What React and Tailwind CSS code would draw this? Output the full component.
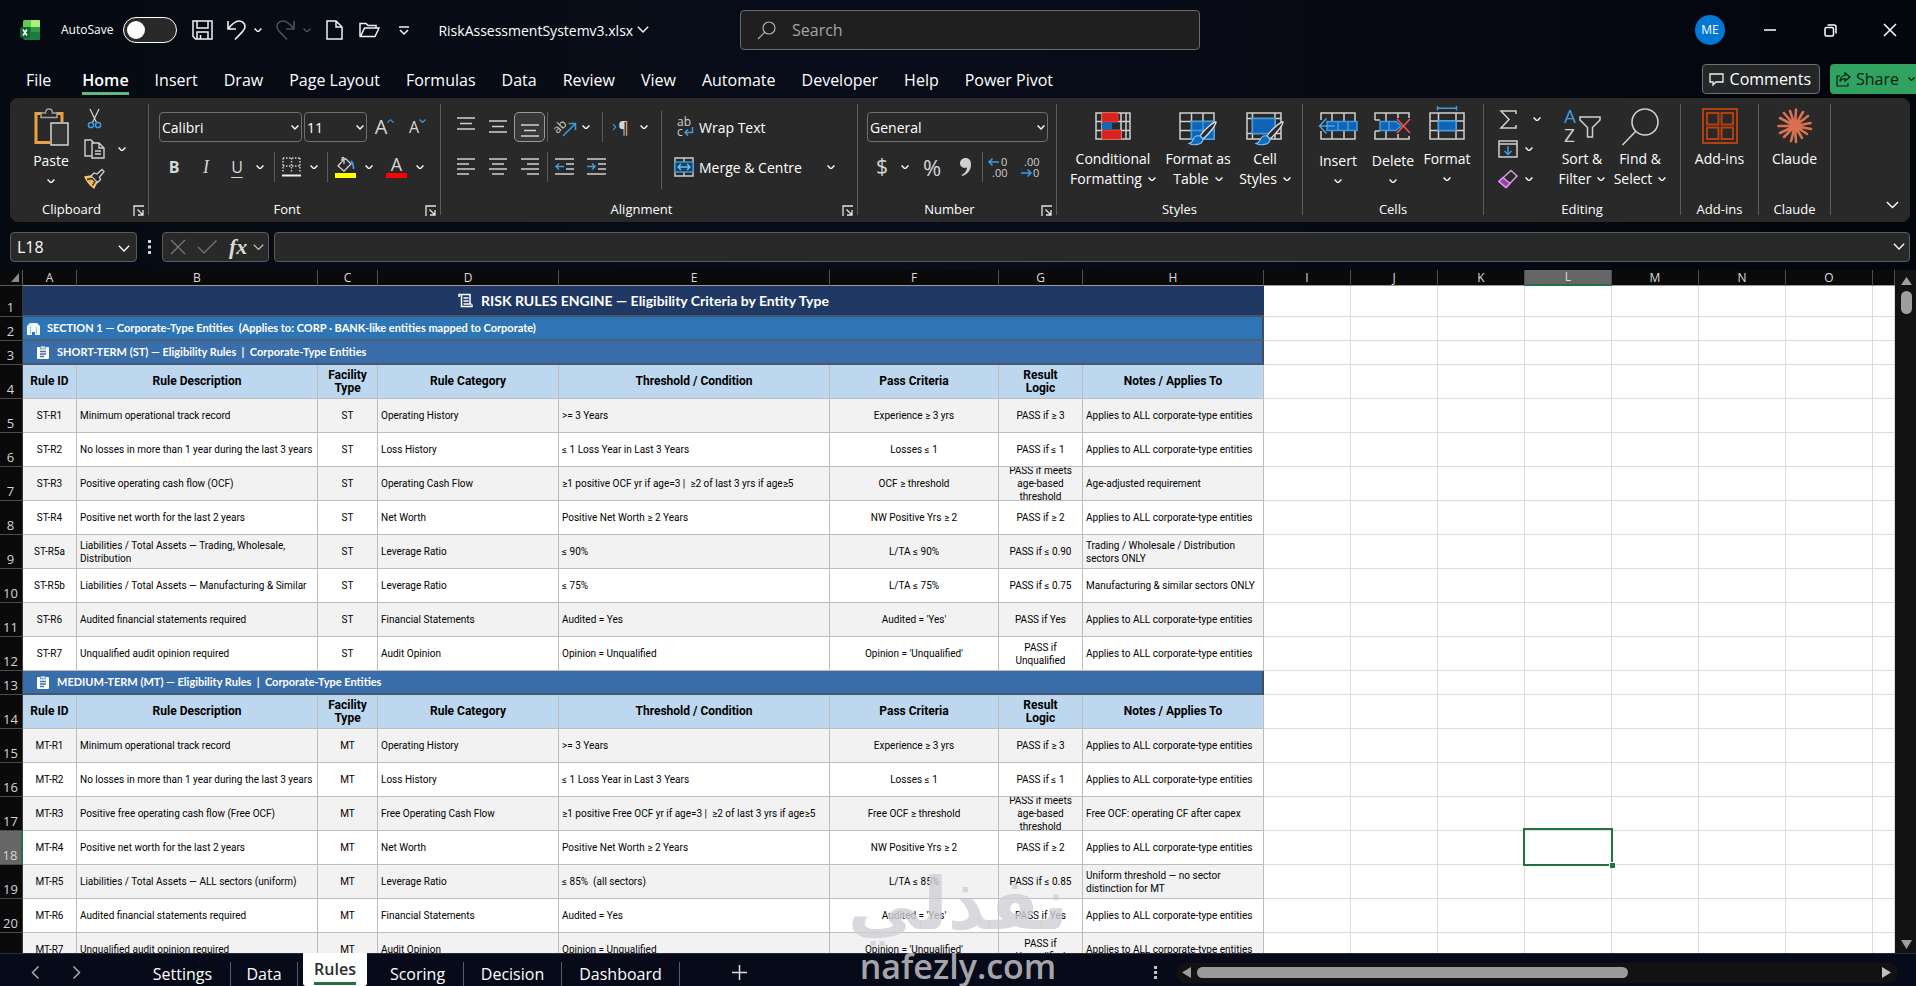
import React, { useState } from 'react';

const columns = [
  { id: 'A', width: 54 },
  { id: 'B', width: 241 },
  { id: 'C', width: 60 },
  { id: 'D', width: 181 },
  { id: 'E', width: 271 },
  { id: 'F', width: 169 },
  { id: 'G', width: 84 },
  { id: 'H', width: 181 },
  { id: 'I', width: 87 },
  { id: 'J', width: 87 },
  { id: 'K', width: 87 },
  { id: 'L', width: 87 },
  { id: 'M', width: 87 },
  { id: 'N', width: 87 },
  { id: 'O', width: 87 },
  { id: '', width: null },
];

const emptyColumns = ['I', 'J', 'K', 'L', 'M', 'N', 'O', 'P'];
const centered = [0, 2, 5, 6];

const header = ['Rule ID', 'Rule Description', 'Facility Type', 'Rule Category', 'Threshold / Condition', 'Pass Criteria', 'Result Logic', 'Notes / Applies To'];
const ALL = 'Applies to ALL corporate-type entities';

const rows = [
  { type: 'title', icon: 'scroll', text: 'RISK RULES ENGINE — Eligibility Criteria by Entity Type' },
  { type: 'section', icon: 'building', text: 'SECTION 1 — Corporate-Type Entities  (Applies to: CORP · BANK-like entities mapped to Corporate)' },
  { type: 'term', icon: 'clipboard', text: 'SHORT-TERM (ST) — Eligibility Rules  |  Corporate-Type Entities' },
  { type: 'header', cells: header },
  { type: 'data', shade: true, cells: ['ST-R1', 'Minimum operational track record', 'ST', 'Operating History', '>= 3 Years', 'Experience ≥ 3 yrs', 'PASS if ≥ 3', ALL] },
  { type: 'data', cells: ['ST-R2', 'No losses in more than 1 year during the last 3 years', 'ST', 'Loss History', '≤ 1 Loss Year in Last 3 Years', 'Losses ≤ 1', 'PASS if ≤ 1', ALL] },
  { type: 'data', shade: true, cells: ['ST-R3', 'Positive operating cash flow (OCF)', 'ST', 'Operating Cash Flow', '≥1 positive OCF yr if age=3 |  ≥2 of last 3 yrs if age≥5', 'OCF ≥ threshold', 'PASS if meets age-based threshold', 'Age-adjusted requirement'] },
  { type: 'data', cells: ['ST-R4', 'Positive net worth for the last 2 years', 'ST', 'Net Worth', 'Positive Net Worth ≥ 2 Years', 'NW Positive Yrs ≥ 2', 'PASS if ≥ 2', ALL] },
  { type: 'data', shade: true, cells: ['ST-R5a', 'Liabilities / Total Assets — Trading, Wholesale, Distribution', 'ST', 'Leverage Ratio', '≤ 90%', 'L/TA ≤ 90%', 'PASS if ≤ 0.90', 'Trading / Wholesale / Distribution sectors ONLY'] },
  { type: 'data', cells: ['ST-R5b', 'Liabilities / Total Assets — Manufacturing & Similar', 'ST', 'Leverage Ratio', '≤ 75%', 'L/TA ≤ 75%', 'PASS if ≤ 0.75', 'Manufacturing & similar sectors ONLY'] },
  { type: 'data', shade: true, cells: ['ST-R6', 'Audited financial statements required', 'ST', 'Financial Statements', 'Audited = Yes', "Audited = 'Yes'", 'PASS if Yes', ALL] },
  { type: 'data', cells: ['ST-R7', 'Unqualified audit opinion required', 'ST', 'Audit Opinion', 'Opinion = Unqualified', "Opinion = 'Unqualified'", 'PASS if Unqualified', ALL] },
  { type: 'term', icon: 'clipboard', text: 'MEDIUM-TERM (MT) — Eligibility Rules  |  Corporate-Type Entities' },
  { type: 'header', cells: header },
  { type: 'data', shade: true, cells: ['MT-R1', 'Minimum operational track record', 'MT', 'Operating History', '>= 3 Years', 'Experience ≥ 3 yrs', 'PASS if ≥ 3', ALL] },
  { type: 'data', cells: ['MT-R2', 'No losses in more than 1 year during the last 3 years', 'MT', 'Loss History', '≤ 1 Loss Year in Last 3 Years', 'Losses ≤ 1', 'PASS if ≤ 1', ALL] },
  { type: 'data', shade: true, cells: ['MT-R3', 'Positive free operating cash flow (Free OCF)', 'MT', 'Free Operating Cash Flow', '≥1 positive Free OCF yr if age=3 |  ≥2 of last 3 yrs if age≥5', 'Free OCF ≥ threshold', 'PASS if meets age-based threshold', 'Free OCF: operating CF after capex'] },
  { type: 'data', cells: ['MT-R4', 'Positive net worth for the last 2 years', 'MT', 'Net Worth', 'Positive Net Worth ≥ 2 Years', 'NW Positive Yrs ≥ 2', 'PASS if ≥ 2', ALL] },
  { type: 'data', shade: true, cells: ['MT-R5', 'Liabilities / Total Assets — ALL sectors (uniform)', 'MT', 'Leverage Ratio', '≤ 85%  (all sectors)', 'L/TA ≤ 85%', 'PASS if ≤ 0.85', 'Uniform threshold — no sector distinction for MT'] },
  { type: 'data', cells: ['MT-R6', 'Audited financial statements required', 'MT', 'Financial Statements', 'Audited = Yes', "Audited = 'Yes'", 'PASS if Yes', ALL] },
  { type: 'data', shade: true, cells: ['MT-R7', 'Unqualified audit opinion required', 'MT', 'Audit Opinion', 'Opinion = Unqualified', "Opinion = 'Unqualified'", 'PASS if Unqualified', ALL] },
];

/* ---------- icons ---------- */

function Chevron({ size = 8, className = '' }) {
  return (
    <svg width={size} height={size * 0.6} viewBox="0 0 10 6" fill="none" stroke="currentColor" strokeWidth={size > 10 ? 1.1 : 1.7} className={`shrink-0 ${className}`}>
      <path d="M.7.7 5 5 9.300.7" />
    </svg>
  );
}

function Svg({ w, h, children, className = '', ...rest }) {
  return (
    <svg width={w} height={h} viewBox={`0 0 ${w} ${h}`} fill="none" stroke="#d0d0d0" strokeWidth="1.5" className={`shrink-0 overflow-visible ${className}`} {...rest}>
      {children}
    </svg>
  );
}

function ExcelLogo() {
  return (
    <Svg w={20} h={20} stroke="none">
      <path d="M3 2a2 2 0 0 1 2-2h14a1 1 0 0 1 1 1v18a1 1 0 0 1-1 1H5a2 2 0 0 1-2-2z" fill="#1b7a3d" />
      <path d="M3 2a2 2 0 0 1 2-2h6v7H3z" fill="#5ccf4e" />
      <path d="M11 0h8a1 1 0 0 1 1 1v6h-9z" fill="#b4ea7a" />
      <path d="M11 7h9v5h-9z" fill="#2f9a48" />
      <rect x="0" y="7" width="10" height="11" rx="2" fill="#10652f" />
      <path d="m3 9.500 4 6M7 9.500l-4 6" stroke="#fff" strokeWidth="1.600" />
    </Svg>
  );
}

const SaveIcon = () => (
  <Svg w={21} h={20} stroke="#f2f2f2">
    <path d="M1 1h19v18H3.500L1 16.500z" />
    <path d="M5 1v7h11V1M5 19v-7h11v7M8.500 19v-4" />
  </Svg>
);

const UndoIcon = ({ flip }) => (
  <Svg w={19} h={20} stroke={flip ? '#4b4f57' : '#f2f2f2'} strokeWidth="1.6" className={flip ? '-scale-x-100' : ''}>
    <path d="M1 1v8h8M1.500 8.500C5 4 8 1 12 1c3.500 0 6 2.600 6 5.600 0 2.200-1 3.600-2.500 5L8 19.500" />
  </Svg>
);

const NewIcon = () => (
  <Svg w={17} h={20} stroke="#f2f2f2">
    <path d="M1 1h9l6 6v12H1zM10 1v6h6" />
  </Svg>
);

const OpenIcon = () => (
  <Svg w={21} h={16} stroke="#f2f2f2">
    <path d="M1 14.500V1.500h6l2 2h8V6M1.500 14.500 5.500 6h14.500l-4 8.500z" />
  </Svg>
);

const PasteIcon = () => (
  <Svg w={35} h={38}>
    <path d="M8 5.500H2v29h14M22 5.500h6V14" stroke="#e8a33d" strokeWidth="3" />
    <path d="M7 9.500V5h4.500c0-2.500 1.500-4 3.500-4s3.500 1.500 3.500 4H23v4.500z" fill="#292929" stroke="#a0a0a0" />
    <rect x="17" y="15" width="17" height="22" fill="#333" stroke="#d6d6d6" />
  </Svg>
);

const CutIcon = () => (
  <Svg w={15} h={20}>
    <path d="m3 0 6.500 13.500M12 0 5.500 13.500" strokeWidth="1.300" />
    <circle cx="4" cy="16" r="2.600" stroke="#3e9be0" />
    <circle cx="11" cy="16" r="2.600" stroke="#3e9be0" />
  </Svg>
);

const CopyIcon = () => (
  <Svg w={21} h={20} strokeWidth="1.4">
    <path d="M8 17H1V1h6l3 3" />
    <path d="M8 4h7l5 5v10H8zM15 4v5h5M11 12h6M11 15h6" />
  </Svg>
);

const PainterIcon = () => (
  <Svg w={21} h={20} strokeWidth="1.3">
    <path d="m1 8 6-1 6 6-3 6C6 16 3 13 1 8z" fill="#f0b44c" stroke="#f3c67a" />
    <path d="m7 7 3-3 3 1 5-4.500 2 2L15.500 8l1 2.500-3 3z" fill="#292929" />
    <path d="M3 10.500 8 9.500l3 3-2.500 4" stroke="#292929" />
  </Svg>
);

function Lines({ kind }) {
  const d = {
    top: 'M0 1h18M3 6.500h12M0 12h18',
    middle: 'M0 4h18M3 9.500h12M0 15h18',
    bottom: 'M0 8h18M3 13.500h12M0 19h18',
    left: 'M0 2h18M0 7h12M0 12h18M0 17h12',
    center: 'M0 2h18M3 7h12M0 12h18M3 17h12',
    right: 'M0 2h18M6 7h12M0 12h18M6 17h12',
  }[kind];
  return <Svg w={18} h={20}><path d={d} /></Svg>;
}

const IndentIcon = ({ right }) => (
  <Svg w={19} h={20}>
    <path d="M0 2h19M11 7h8M11 12h8M0 17h19" />
    <path d={right ? 'M0 9.500h8M5 6.500l3 3-3 3' : 'M9 9.500H1M4 6.500l-3 3 3 3'} stroke="#3e9be0" />
  </Svg>
);

const OrientationIcon = () => (
  <Svg w={22} h={22}>
    <text x="-1" y="14" transform="rotate(-45 6 12)" fontSize="12" fill="#d0d0d0" stroke="none" fontFamily="Open Sans">ab</text>
    <path d="M8 20 20 8M13.500 7.500H20.500V14" stroke="#3e9be0" />
  </Svg>
);

const BordersIcon = () => (
  <Svg w={19} h={20} strokeWidth="1.400">
    <path d="M1 1h17M1 9h17M1 1v15M9.500 1v15M18 1v15" strokeDasharray="1.500 1.500" />
    <path d="M0 18.500h19" strokeWidth="2" stroke="#f0f0f0" />
  </Svg>
);

const FillIcon = () => (
  <Svg w={21} h={22} strokeWidth="1.300">
    <path d="m9 3-6 7 6 5 7-7-5-5zM9 8V2.500C9 1 7 1 7 2.500V6" />
    <path d="M16 5c2 2 2.500 4 2.500 8" stroke="#3e9be0" strokeWidth="1.800" />
    <rect x="0" y="17" width="21" height="5" fill="#ffff00" stroke="none" />
  </Svg>
);

const MergeIcon = () => (
  <Svg w={20} h={20} strokeWidth="1.400">
    <path d="M1 1h18v18H1zM10 1v4M10 15v4" />
    <rect x="1" y="5" width="18" height="10" fill="#173f60" stroke="#3e9be0" />
    <path d="M4 10h12M7 7l-3 3 3 3M13 7l3 3-3 3" stroke="#6cbcf5" />
  </Svg>
);

const GridLines = () => <path d="M1 1h34v26H1zM1 9.500h34M1 18.500h34M12.500 1v26M24 1v26" />;

const Brush = () => (
  <g>
    <path d="M37 10c-3 0-12 8-16 14l3 3c6-5 13-14 13-17z" fill="#292929" stroke="#dcdcdc" strokeWidth="1.300" />
    <path d="M21 24c-4-1-6 1-7 4-.7 2-2 3-4 3.500 4 2 14 2 14-4.500z" fill="#0f6cbd" stroke="#7cc0f5" strokeWidth="1.200" />
  </g>
);

const ConditionalIcon = () => (
  <Svg w={36} h={28}>
    <path d="M1 1h34v26H1zM1 9.500h34M1 18.500h34M7 1v26M26 1v26M31 1v26" />
    <path d="M7 1h16v8.500H7zM7 18.500h19V27H7z" fill="#d9221c" stroke="#e8382f" strokeWidth="1" />
    <path d="M7 10.500h10v7H7z" fill="#1466b8" stroke="none" />
  </Svg>
);

const FormatTableIcon = () => (
  <Svg w={38} h={34}>
    <GridLines />
    <path d="M12.500 9.500H35V27H12.500z" fill="#0f64b8" stroke="#3e9be0" />
    <path d="M24 9.500V27M12.500 18.500H35" stroke="#3e9be0" />
    <Brush />
  </Svg>
);

const CellStylesIcon = () => (
  <Svg w={38} h={34}>
    <path d="M1 1h34v26H1zM1 6.500h34M1 21.500h34M6.500 1v26M29 1v26" />
    <path d="M6.500 6.500H29v15H6.500z" fill="#0f64b8" stroke="#3e9be0" />
    <Brush />
  </Svg>
);

const InsertCellsIcon = () => (
  <Svg w={40} h={28}>
    <path d="M3 8V1h34v8M3 19v8h34v-8M14 1v8M26 1v8M14 19v8M26 19v8" />
    <path d="M9 9.500h30v9H9zM20 9.500v9M30 9.500v9" fill="#0f64b8" stroke="#3e9be0" />
    <path d="M17 14H1.500M8.500 6.500 1.500 14l7 7.500" stroke="#4ba3e6" />
  </Svg>
);

const DeleteCellsIcon = () => (
  <Svg w={38} h={28}>
    <path d="M1 8V1h34v5M1 19v8h34v-3M12 1v8M24 1v5M12 19v8M24 22v5M1 8h5M1 19h5" />
    <path d="M6 9.500h16l5 4.500-5 4.500H6zM15 9.500v9" fill="#0f64b8" stroke="#3e9be0" />
    <path d="m23 7 13 14M36 7 23 21" stroke="#ef5350" strokeWidth="1.600" />
  </Svg>
);

const FormatCellsIcon = () => (
  <Svg w={36} h={34}>
    <path d="M1 7h34v26H1zM1 15h34M1 24.500h34M9.500 7v26M27 7v26" />
    <path d="M9.500 15H27v9.500H9.500z" fill="#0f64b8" stroke="#3e9be0" />
    <path d="M8.500 0v4.500M27.500 0v4.500M8.500 2.200h19" stroke="#3e9be0" />
  </Svg>
);

const SumIcon = () => (
  <Svg w={17} h={19}>
    <path d="M16 4V1H1l8 8.500L1 18h15v-3" />
  </Svg>
);

const FillDownIcon = () => (
  <Svg w={20} h={18}>
    <path d="M1 1h18v16H1zM1 4h18" />
    <path d="M10 6v8.500M6.500 11l3.500 3.500 3.500-3.500" stroke="#3e9be0" />
  </Svg>
);

const EraserIcon = () => (
  <Svg w={20} h={20} stroke="#d59be0">
    <path d="M13 1.500 19 7 8 18.500 1 12.500z" />
    <path d="m5 8.500 7 6L8 18.500l-7-6z" fill="#a33cb4" />
  </Svg>
);

const SortIcon = () => (
  <Svg w={37} h={36}>
    <text x="0" y="15" fontSize="19" fill="#3e9be0" stroke="none" fontFamily="Open Sans">A</text>
    <text x="0" y="34" fontSize="19" fill="#d0d0d0" stroke="none" fontFamily="Open Sans">Z</text>
    <path d="M16 9h20v3l-7.500 7.500V29h-5v-9.500L16 12z" />
  </Svg>
);

const FindIcon = () => (
  <Svg w={37} h={38} strokeWidth="1.600">
    <circle cx="23" cy="14" r="13" />
    <path d="M13.500 23.500.5 37" />
  </Svg>
);

const AddinsIcon = () => (
  <Svg w={36} h={36} stroke="#b5400f" strokeWidth="2">
    <path d="M1 1h34v34H1zM5 5h11.500v11.500H5zM19.500 5H31v11.500H19.500zM5 19.500h11.500V31H5zM19.500 19.500H31V31H19.500z" />
  </Svg>
);

const ClaudeIcon = () => (
  <Svg w={36} h={36} stroke="#d9704f" strokeWidth="2.600" strokeLinecap="round">
    <path d="m18 18-5-15M18 18l1-16.500M18 18l8-14M18 18l13-10M18 18l15.500-3M18 18l16 3M18 18l12 8M18 18l7 12M18 18l1 16M18 18l-4 15M18 18 7 29M18 18 3 25M18 18H1.500M18 18 3 10M18 18 7 5" />
  </Svg>
);

const Launcher = ({ label }) => (
  <button aria-label={label} className="mr-1">
    <Svg w={11} h={11} stroke="#e4e4e4" strokeWidth="1.300">
      <path d="M1 11V1h10M4.500 4.500 10 10M10 5v5H5" />
    </Svg>
  </button>
);

function SheetIcon({ name }) {
  if (name === 'scroll') {
    return (
      <Svg w={15} h={15} stroke="#fff">
        <path d="M1 4V1.500h11V11M3.500 2v11.500h10.500V11.500M5.500 5h5M5.500 8h5M5.500 11h8" />
      </Svg>
    );
  }
  if (name === 'building') {
    return (
      <Svg w={13} h={13} stroke="none">
        <path d="M0 13V4l3-3h7l3 3v9H8v-3H5v3z" fill="#f4f8fc" />
        <path d="M3.500 5v7M9.500 5v7" stroke="#9dc3e6" strokeWidth="1" />
      </Svg>
    );
  }
  return (
    <Svg w={12} h={13} stroke="none">
      <rect x="0" y="1" width="12" height="12" rx="1" fill="#fff" />
      <rect x="3.500" y="0" width="5" height="3" fill="#cfe0f2" stroke="#3a6fad" strokeWidth=".6" />
      <path d="M3 5.500h6M3 8h6M3 10.500h4" stroke="#3a6fad" />
    </Svg>
  );
}

/* ---------- ribbon ---------- */

function Group({ label, className, launcher, children }) {
  return (
    <>
      <section aria-label={label} className={`flex h-[118px] shrink-0 flex-col justify-between ${className}`}>
        <div className="flex">{children}</div>
        <div className="mb-[2px] flex h-5 items-center text-[13px]">
          <span className="flex-1 text-center">{label}</span>
          {launcher && <Launcher label={`${label} settings`} />}
        </div>
      </section>
      <div className="h-[111px] w-px shrink-0 bg-[#5c5c5c]" />
    </>
  );
}

function Tool({ label, className = '', children }) {
  return (
    <button aria-label={label} className={`flex h-[30px] shrink-0 items-center justify-center text-[#d6d6d6] ${className}`}>
      {children}
    </button>
  );
}

const More = ({ label, className = 'w-4' }) => (
  <Tool label={`${label} options`} className={className}><Chevron className="text-white" /></Tool>
);

const Sep = ({ className = 'h-[30px]' }) => <div className={`w-px shrink-0 bg-[#5c5c5c] ${className}`} />;

function BigButton({ icon, lines, className, chevron }) {
  return (
    <button className={`flex shrink-0 flex-col items-center text-[14px] leading-5 ${className}`}>
      <span className="flex h-[45px] items-start justify-center">{icon}</span>
      {lines.map((line, i) => (
        <span key={line} className="flex items-center gap-[6px] whitespace-nowrap">
          {line}
          {chevron === 'inline' && i === lines.length - 1 && <Chevron />}
        </span>
      ))}
      {chevron === 'below' && <span className="flex h-5 items-center"><Chevron /></span>}
    </button>
  );
}

function Picker({ label, value, className }) {
  return (
    <div className={`relative shrink-0 ${className}`}>
      <select aria-label={label} defaultValue={value} className="h-[30px] w-full appearance-none rounded-[4px] border border-[#6f6f6f] bg-[#292929] pl-[2px] text-[14px] text-white">
        <option>{value}</option>
      </select>
      <Chevron className="pointer-events-none absolute right-[3px] top-[13px]" />
    </div>
  );
}

function Ribbon() {
  return (
    <div className="ml-[10px] mr-[6px] flex h-[124px] shrink-0 overflow-hidden rounded-lg bg-[#292929] pt-[6px]">
      <Group label="Clipboard" launcher className="w-[138px]">
        <BigButton icon={<PasteIcon />} lines={['Paste']} chevron="below" className="ml-[19px] w-[44px] pt-1 [&>span:first-child]:h-[43px]" />
        <div className="ml-[10px] flex flex-col">
          <Tool label="Cut" className="h-8 w-[22px]"><CutIcon /></Tool>
          <div className="flex">
            <Tool label="Copy" className="h-8 w-[22px]"><CopyIcon /></Tool>
            <More label="Copy" className="ml-[9px] w-4" />
          </div>
          <Tool label="Format painter" className="h-8 w-[22px]"><PainterIcon /></Tool>
        </div>
      </Group>

      <Group label="Font" launcher className="w-[291px]">
        <div className="ml-[10px] flex flex-col gap-[10px] pt-2">
          <div className="flex">
            <Picker label="Font name" value="Calibri" className="w-[143px]" />
            <Picker label="Font size" value="11" className="ml-[2px] w-[63px]" />
            <Tool label="Increase font size" className="ml-[7px] w-[21px] text-[20px]">
              A<Chevron size={7} className="mb-3 rotate-180 text-[#3e9be0]" />
            </Tool>
            <Tool label="Decrease font size" className="ml-[12px] w-[21px] text-[16px]">
              A<Chevron size={7} className="mb-3 text-[#3e9be0]" />
            </Tool>
          </div>
          <div className="flex">
            <Tool label="Bold" className="w-[30px] text-[16px] font-bold">B</Tool>
            <Tool label="Italic" className="ml-[2px] w-[30px] font-['Liberation_Serif'] text-[18px] italic">I</Tool>
            <Tool label="Underline" className="ml-px w-[30px] text-[16px] underline underline-offset-4">U</Tool>
            <More label="Underline" />
            <Sep className="ml-[6px] h-[30px]" />
            <Tool label="Borders" className="ml-[6px] w-[20px]"><BordersIcon /></Tool>
            <More label="Borders" className="ml-[5px] w-4" />
            <Sep className="ml-[5px] h-[30px]" />
            <Tool label="Fill colour" className="ml-[7px] w-[21px]"><FillIcon /></Tool>
            <More label="Fill colour" className="ml-[5px] w-4" />
            <Tool label="Font colour" className="ml-[9px] w-[21px] flex-col">
              <span className="text-[18px] leading-[17px]">A</span>
              <span className="h-[5px] w-full bg-[#ff0000]" />
            </Tool>
            <More label="Font colour" className="ml-[5px] w-4" />
          </div>
        </div>
      </Group>

      <Group label="Alignment" launcher className="w-[416px]">
        <div className="ml-[9px] flex flex-col gap-[10px] pt-2">
          <div className="flex">
            <Tool label="Top align" className="w-8"><Lines kind="top" /></Tool>
            <Tool label="Middle align" className="w-8"><Lines kind="middle" /></Tool>
            <Tool label="Bottom align" className="w-[31px] rounded-[5px] border border-[#9a9a9a] bg-[#383838]"><Lines kind="bottom" /></Tool>
            <Sep className="ml-[2px] h-[30px]" />
            <Tool label="Orientation" className="ml-[6px] w-[24px]"><OrientationIcon /></Tool>
            <More label="Orientation" />
            <Sep className="ml-2 h-[30px]" />
            <Tool label="Text direction" className="ml-2 w-[18px] text-[16px]">
              <Chevron size={7} className="-rotate-90 text-[#3e9be0]" />¶
            </Tool>
            <More label="Text direction" className="ml-[7px] w-4" />
          </div>
          <div className="flex">
            <Tool label="Align left" className="w-8"><Lines kind="left" /></Tool>
            <Tool label="Centre" className="w-8"><Lines kind="center" /></Tool>
            <Tool label="Align right" className="w-[31px]"><Lines kind="right" /></Tool>
            <Sep className="ml-[2px] h-[30px]" />
            <Tool label="Decrease indent" className="w-8"><IndentIcon /></Tool>
            <Tool label="Increase indent" className="w-8"><IndentIcon right /></Tool>
          </div>
        </div>
        <Sep className="ml-[9px] mt-[7px] h-[78px]" />
        <div className="ml-[12px] flex flex-col items-start gap-[10px] pt-2 text-[14px]">
          <button className="flex h-[30px] items-center gap-[5px]">
            <Svg w={20} h={22}>
              <text x="3" y="10" fontSize="12" fill="#d0d0d0" stroke="none" fontFamily="Open Sans">ab</text>
              <text x="3" y="20" fontSize="12" fill="#d0d0d0" stroke="none" fontFamily="Open Sans">c</text>
              <path d="M18.500 11v5.500H11M14 13.500l-3 3 3 3" stroke="#3e9be0" />
            </Svg>
            Wrap Text
          </button>
          <div className="flex">
            <button className="flex h-[30px] items-center gap-[5px]"><MergeIcon />Merge &amp; Centre</button>
            <More label="Merge" className="ml-[21px] w-4" />
          </div>
        </div>
      </Group>

      <Group label="Number" launcher className="w-[198px]">
        <div className="ml-[9px] flex flex-col gap-[10px] pt-2">
          <Picker label="Number format" value="General" className="w-[181px]" />
          <div className="flex">
            <Tool label="Accounting format" className="w-[30px] text-[21px]">$</Tool>
            <More label="Accounting format" />
            <Tool label="Percent" className="ml-[6px] w-[26px] text-[22px]">%</Tool>
            <Tool label="Comma style" className="ml-[7px] w-[26px]">
              <Svg w={11} h={18} stroke="none"><path d="M5.500 0C9 0 11 2.500 11 6c0 6-3 10-9 12l-.5-1C5 15 7 12.500 7 9.500 3 11 0 8.500 0 5.500 0 2.300 2.300 0 5.500 0z" fill="#d0d0d0" /></Svg>
            </Tool>
            <Sep className="ml-[4px] h-[30px]" />
            <Tool label="Increase decimal" className="ml-[5px] w-[22px]">
              <Svg w={22} h={22}>
                <text x="13" y="10" fontSize="11" fill="#d0d0d0" stroke="none" fontFamily="Open Sans">0</text>
                <text x="4" y="21" fontSize="11" fill="#d0d0d0" stroke="none" fontFamily="Open Sans">.00</text>
                <path d="M11 6H1M4.500 2.500 1 6l3.500 3.500" stroke="#3e9be0" />
              </Svg>
            </Tool>
            <Tool label="Decrease decimal" className="ml-[10px] w-[22px]">
              <Svg w={22} h={22}>
                <text x="4" y="10" fontSize="11" fill="#d0d0d0" stroke="none" fontFamily="Open Sans">.00</text>
                <text x="13" y="21" fontSize="11" fill="#d0d0d0" stroke="none" fontFamily="Open Sans">0</text>
                <path d="M1 17h10M7.500 13.500 11 17l-3.500 3.500" stroke="#3e9be0" />
              </Svg>
            </Tool>
          </div>
        </div>
      </Group>

      <Group label="Styles" className="w-[245px]">
        <BigButton icon={<ConditionalIcon />} lines={['Conditional', 'Formatting']} chevron="inline" className="ml-[8px] w-[96px] pt-2 [&>span:first-child]:h-[37px]" />
        <BigButton icon={<FormatTableIcon />} lines={['Format as', 'Table']} chevron="inline" className="w-[74px] pt-2 [&>span:first-child]:h-[37px]" />
        <BigButton icon={<CellStylesIcon />} lines={['Cell', 'Styles']} chevron="inline" className="w-[60px] pt-2 [&>span:first-child]:h-[37px]" />
      </Group>

      <Group label="Cells" className="w-[180px]">
        <BigButton icon={<InsertCellsIcon />} lines={['Insert']} chevron="below" className="ml-[8px] w-[54px] pt-2 [&>span:first-child]:h-[39px]" />
        <BigButton icon={<DeleteCellsIcon />} lines={['Delete']} chevron="below" className="w-[56px] pt-2 [&>span:first-child]:h-[39px]" />
        <BigButton icon={<FormatCellsIcon />} lines={['Format']} chevron="below" className="w-[52px] pt-[2px] [&>span:first-child]:h-[43px]" />
      </Group>

      <Group label="Editing" className="w-[196px]">
        <div className="ml-[12px] flex flex-col">
          <div className="flex">
            <Tool label="AutoSum" className="h-8 w-[24px]"><SumIcon /></Tool>
            <More label="AutoSum" className="ml-[9px] w-4" />
          </div>
          <div className="flex">
            <Tool label="Fill" className="h-8 w-[24px]"><FillDownIcon /></Tool>
            <More label="Fill" className="ml-[1px] w-4" />
          </div>
          <div className="flex">
            <Tool label="Clear" className="h-8 w-[24px]"><EraserIcon /></Tool>
            <More label="Clear" className="ml-[1px] w-4" />
          </div>
        </div>
        <BigButton icon={<SortIcon />} lines={['Sort &', 'Filter']} chevron="inline" className="ml-[9px] w-[56px] pt-1 [&>span:first-child]:h-[41px]" />
        <BigButton icon={<FindIcon />} lines={['Find &', 'Select']} chevron="inline" className="w-[60px] pt-1 [&>span:first-child]:h-[41px]" />
      </Group>

      <Group label="Add-ins" className="w-[77px]">
        <BigButton icon={<AddinsIcon />} lines={['Add-ins']} className="w-full pt-1 [&>span:first-child]:h-[41px]" />
      </Group>

      <Group label="Claude" className="w-[71px]">
        <BigButton icon={<ClaudeIcon />} lines={['Claude']} className="w-full pt-1 [&>span:first-child]:h-[41px]" />
      </Group>

      <button aria-label="Collapse ribbon" className="mb-[13px] ml-auto mr-[11px] self-end"><Chevron size={13} /></button>
    </div>
  );
}

/* ---------- window chrome ---------- */

function TitleBar() {
  const [autoSave, setAutoSave] = useState(false);
  return (
    <header className="flex h-[60px] shrink-0 items-center">
      <div className="flex w-[740px] shrink-0 items-center pl-5">
        <ExcelLogo />
        <label className="ml-[21px] flex items-center gap-[10px] text-[12px]">
          AutoSave
          <input
            type="checkbox"
            checked={autoSave}
            onChange={(e) => setAutoSave(e.target.checked)}
            className="h-[26px] w-[54px] appearance-none rounded-full border border-white bg-[#292929] before:ml-[3px] before:mt-[3px] before:block before:size-[18px] before:rounded-full before:bg-white before:content-['']"
          />
        </label>
        <button aria-label="Save" className="ml-[15px]"><SaveIcon /></button>
        <button aria-label="Undo" className="ml-[14px]"><UndoIcon /></button>
        <button aria-label="Undo list" className="ml-2"><Chevron /></button>
        <button aria-label="Redo" className="ml-[14px]"><UndoIcon flip /></button>
        <button aria-label="Redo list" className="ml-2 text-[#4b4f57]"><Chevron /></button>
        <button aria-label="New" className="ml-[15px]"><NewIcon /></button>
        <button aria-label="Open" className="ml-4"><OpenIcon /></button>
        <button aria-label="Customise toolbar" className="ml-[19px]">
          <Svg w={10} h={9} stroke="#f2f2f2"><path d="M0 1h10M1 4l4 4 4-4" /></Svg>
        </button>
        <button className="ml-[29px] flex items-center gap-[4px] text-[14px]">
          RiskAssessmentSystemv3.xlsx
          <Chevron size={12} />
        </button>
      </div>
      <label className="flex h-10 w-[460px] items-center rounded-[4px] border border-[#6a6a6a] bg-[#1f1f1f] pl-[16px]">
        <Svg w={19} h={19} stroke="#b0b0b0" strokeWidth="1.200"><circle cx="12" cy="7" r="6" /><path d="M7.500 11.500 1 18" /></Svg>
        <input aria-label="Search" placeholder="Search" className="ml-[16px] flex-1 bg-transparent text-[16px] outline-none placeholder:text-[#a3a3a3]" />
      </label>
      <div className="ml-auto mr-5 flex items-center">
        <button className="size-[30px] rounded-full bg-[#0078d4] text-[12px]">ME</button>
        <button aria-label="Minimise" className="ml-[39px]"><Svg w={12} h={12} stroke="#fff"><path d="M0 6h12" /></Svg></button>
        <button aria-label="Restore" className="ml-12"><Svg w={13} h={13} stroke="#fff"><rect x="1" y="3.500" width="8.500" height="8.500" rx="1.500" /><path d="M3.500 1H10a2 2 0 0 1 2 2v6.500" /></Svg></button>
        <button aria-label="Close" className="ml-[47px]"><Svg w={12} h={12} stroke="#fff"><path d="m0 0 12 12M12 0 0 12" /></Svg></button>
      </div>
    </header>
  );
}

const menu = ['File', 'Home', 'Insert', 'Draw', 'Page Layout', 'Formulas', 'Data', 'Review', 'View', 'Automate', 'Developer', 'Help', 'Power Pivot'];

function MenuTabs() {
  return (
    <nav className="flex h-[38px] shrink-0 items-start">
      <div className="flex gap-[26px] pl-[26px] pt-2 text-[16px] leading-6">
        {menu.map((item) => (
          <button key={item} className={item === 'Home' ? 'ml-[5px] h-[27px] border-b-[3px] border-[#5fba85] font-semibold' : 'h-[27px] pb-[3px]'}>
            {item}
          </button>
        ))}
      </div>
      <button className="ml-auto mt-1 flex h-[30px] items-center gap-[6px] rounded-[4px] border border-[#6f6f6f] bg-[#242628] pl-[6px] pr-2 text-[16px]">
        <Svg w={15} h={13} stroke="#f2f2f2" strokeWidth="1.300"><path d="M1 1h13v8H7l-3 3V9H1z" /></Svg>
        Comments
      </button>
      <button className="ml-[10px] mt-1 flex h-[30px] w-[86px] shrink-0 items-center rounded-l-[4px] bg-[#2fa35f] pl-[6px] text-[16px] text-[#06210f]">
        <Svg w={15} h={15} stroke="#06210f" strokeWidth="1.200" className="mr-[5px]"><path d="M4 4H1v10h11v-3M9 1l5 4-5 4V6.500c-2 0-4 1-5 3C4 6 6 3.500 9 3.500z" /></Svg>
        Share
        <Chevron size={7} className="ml-auto mr-px" />
      </button>
    </nav>
  );
}

function FormulaBar() {
  return (
    <div className="mb-2 ml-[10px] mr-[6px] mt-[10px] flex h-[30px] shrink-0 items-center">
      <div className="relative h-full w-[127px]">
        <input aria-label="Name box" defaultValue="L18" className="h-full w-full rounded-[4px] border border-[#5a5a5a] bg-[#292929] pl-[6px] text-[16px]" />
        <Chevron size={12} className="absolute right-[7px] top-[13px]" />
      </div>
      <Svg w={3} h={14} stroke="none" className="mx-[11px]"><path d="M0 0h3v3H0zM0 5.500h3v3H0zM0 11h3v3H0z" fill="#d6d6d6" /></Svg>
      <div className="flex h-full w-[107px] items-center rounded-[4px] border border-[#5a5a5a] bg-[#292929] pl-[7px]">
        <button aria-label="Cancel"><Svg w={16} h={16} stroke="#7a7a7a" strokeWidth="1.200"><path d="m1 1 14 14M15 1 1 15" /></Svg></button>
        <button aria-label="Enter" className="ml-3"><Svg w={19} h={14} stroke="#7a7a7a" strokeWidth="1.200"><path d="m0 7 6 6L18.500.5" /></Svg></button>
        <button aria-label="Insert function" className="ml-[12px] font-['Liberation_Serif'] text-[22px] font-bold italic leading-5 text-[#d8d8d8]">fx</button>
        <button aria-label="Recent functions" className="ml-[6px]"><Chevron size={11} className="text-[#c0c0c0]" /></button>
      </div>
      <div className="relative ml-[5px] h-full flex-1">
        <input aria-label="Formula" className="h-full w-full rounded-[4px] border border-[#5a5a5a] bg-[#292929]" />
        <Chevron size={12} className="absolute right-[5px] top-[11px]" />
      </div>
    </div>
  );
}

/* ---------- sheet ---------- */

const bandStyle = {
  title: 'h-[31px] border-b-2 border-[#46566b] bg-[#203864] text-[14px]',
  section: 'h-6 border-b-2 border-r-2 border-[#4d5f70] border-r-[#3f4d5c] bg-[#2e75b6] text-[11px]',
  term: 'h-6 border-b-2 border-r-2 border-[#46586d] border-r-[#3f4d5c] bg-[#3a6eab] text-[11px]',
};

const bandInner = {
  title: 'justify-center gap-2',
  section: 'gap-[7px] pl-1',
  term: 'gap-2 pl-[14px]',
};

function cellTextStyle(type, i) {
  if (type === 'header') return i === 0 ? 'justify-center text-center text-[12px]' : 'justify-center px-3 text-center text-[12px]';
  return centered.includes(i) ? 'justify-center px-2 text-center text-[10px]' : 'pl-[3px] text-[10px]';
}

function SheetRow({ row, number }) {
  const selected = number === 18;
  return (
    <tr>
      <th className={`border-b border-[#4a4a4a] p-0 pb-px pr-px align-bottom text-[13px] font-normal leading-4 text-[#d4d4d4] ${selected ? 'border-r-2 border-r-[#217346] bg-[#666]' : 'border-r border-r-[#3a3a3a] bg-[#0a0a0a]'}`}>
        {number}
      </th>
      {row.text ? (
        <td colSpan={8} className={`p-0 font-['Lato'] font-bold text-white ${bandStyle[row.type]}`}>
          <div className={`flex items-center whitespace-pre ${bandInner[row.type]}`}>
            <SheetIcon name={row.icon} />
            {row.text}
          </div>
        </td>
      ) : (
        row.cells.map((cell, i) => (
          <td
            key={i}
            className={`h-[34px] border-b border-r border-[#bdbdbd] p-0 ${row.type === 'header' ? 'bg-[#bdd7ee] font-bold' : row.shade ? 'bg-[#f2f2f2]' : 'bg-white'}`}
          >
            <div className={`flex h-[33px] items-center overflow-hidden whitespace-pre-wrap font-['Roboto'] leading-[13px] text-black ${cellTextStyle(row.type, i)}`}>
              {cell}
            </div>
          </td>
        ))
      )}
      {emptyColumns.map((col) => (
        <td key={col} className="relative border-b border-r border-[#dcdcdc] bg-white p-0">
          {selected && col === 'L' && (
            <div className="absolute -bottom-[2px] -left-[2px] -right-[2px] -top-[3px] z-10 border-2 border-[#217346]">
              <span className="absolute -bottom-[4px] -right-[4px] size-[6px] border-l border-t border-white bg-[#217346]" />
            </div>
          )}
        </td>
      ))}
    </tr>
  );
}

function Sheet() {
  return (
    <div className="flex min-h-0 flex-1">
      <div className="min-w-0 flex-1 overflow-hidden">
        <table className="w-full table-fixed border-separate border-spacing-0">
          <colgroup>
            <col className="w-[23px]" />
            {columns.map((col) => (
              <col key={col.id} style={col.width ? { width: col.width } : undefined} />
            ))}
          </colgroup>
          <thead>
            <tr className="text-[12px] leading-[14px] text-[#dcdcdc]">
              <th className="border-b border-r border-[#5a5a5a] bg-[#0a0a0a] p-0">
                <Svg w={8} h={9} stroke="none" className="ml-auto mr-[3px]"><path d="M8 0v9H0z" fill="#8a8a8a" /></Svg>
              </th>
              {columns.map((col) => (
                <th key={col.id} className={`h-4 border-r border-[#4d4d4d] p-0 font-normal ${col.id === 'L' ? 'border-b-2 border-b-[#217346] bg-[#666]' : 'border-b border-b-[#9a9a9a] bg-[#0a0a0a]'}`}>
                  {col.id}
                </th>
              ))}
            </tr>
          </thead>
          <tbody>
            {rows.map((row, i) => (
              <SheetRow key={i} row={row} number={i + 1} />
            ))}
          </tbody>
        </table>
      </div>
      <div className="flex w-[21px] shrink-0 flex-col items-center bg-[#121212] pb-1 pl-px pt-[7px]">
        <button aria-label="Scroll up"><Svg w={11} h={8} stroke="none"><path d="M5.500 0 11 8H0z" fill="#9e9e9e" /></Svg></button>
        <div className="mt-[6px] h-[23px] w-[11px] rounded-full bg-[#9e9e9e]" />
        <button aria-label="Scroll down" className="mt-auto"><Svg w={11} h={9} stroke="none"><path d="M0 0h11L5.500 9z" fill="#9e9e9e" /></Svg></button>
      </div>
    </div>
  );
}

const sheetTabs = [
  { name: 'Settings', width: 'w-[96px]' },
  { name: 'Data', width: 'w-[67px]' },
  { name: 'Rules', width: 'w-[64px]' },
  { name: 'Scoring', width: 'w-[92px]' },
  { name: 'Decision', width: 'w-[98px]' },
  { name: 'Dashboard', width: 'w-[118px]' },
];

function SheetTabs() {
  const [active, setActive] = useState('Rules');
  return (
    <footer className="flex h-[33px] shrink-0 items-start border-t border-[#2c2c34] bg-[#070a18]">
      <div className="flex h-full w-[135px] shrink-0 items-center gap-[32px] pl-[31px] pt-[5px] text-[#a8a8a8]">
        <button aria-label="Previous sheet"><Svg w={9} h={13} stroke="currentColor"><path d="M7.500.5 1.500 6.500l6 6" /></Svg></button>
        <button aria-label="Next sheet"><Svg w={9} h={13} stroke="currentColor"><path d="m1.500.5 6 6-6 6" /></Svg></button>
      </div>
      {sheetTabs.map((tab) =>
        tab.name === active ? (
          <button key={tab.name} className={`mx-[5px] -mt-px h-[33px] shrink-0 rounded-b-[3px] bg-white text-[16px] font-semibold text-[#2b2b2b] ${tab.width}`}>
            <span className="inline-block h-[30px] border-b-[3px] border-[#217346] leading-7">{tab.name}</span>
          </button>
        ) : (
          <button key={tab.name} onClick={() => setActive(tab.name)} className={`mt-2 h-6 shrink-0 border-r border-[#5a5c66] text-[16px] leading-6 ${tab.width}`}>
            {tab.name}
          </button>
        )
      )}
      <button aria-label="New sheet" className="ml-[52px] mt-[11px]"><Svg w={15} h={15} stroke="#e0e0e0"><path d="M7.500 0v15M0 7.500h15" /></Svg></button>
      <div className="ml-auto flex h-full w-[762px] shrink-0 items-center pt-[5px]">
        <Svg w={3} h={13} stroke="none"><path d="M0 0h3v3H0zM0 5h3v3H0zM0 10h3v3H0z" fill="#c4c4c4" /></Svg>
        <div className="ml-[19px] mr-[18px] flex h-5 flex-1 items-center rounded-full bg-[#121212] px-[6px]">
          <button aria-label="Scroll left"><Svg w={9} h={11} stroke="none"><path d="M9 0v11L0 5.500z" fill="#9e9e9e" /></Svg></button>
          <div className="ml-[6px] h-[11px] w-[431px] rounded-full bg-[#9a9a9a]" />
          <button aria-label="Scroll right" className="ml-auto mr-px"><Svg w={9} h={11} stroke="none"><path d="M0 0v11l9-5.500z" fill="#c0c0c0" /></Svg></button>
        </div>
      </div>
    </footer>
  );
}

function Watermark() {
  return (
    <div className="pointer-events-none absolute bottom-0 left-1/2 z-20 flex -translate-x-1/2 flex-col items-center text-[#d0d0d4]/80">
      <span lang="ar" dir="rtl" className="font-['DejaVu_Sans'] text-[72px] font-bold leading-[84px]">نفذلي</span>
      <span className="font-['Open_Sans'] text-[34px] font-semibold leading-[40px]">nafezly.com</span>
    </div>
  );
}

export default function App() {
  return (
    <div className="relative flex h-screen flex-col overflow-hidden bg-gradient-to-r from-[#050a12] via-[#090d1a] to-[#04060d] font-['Open_Sans','Noto_Sans',sans-serif] text-white">
      <TitleBar />
      <MenuTabs />
      <Ribbon />
      <FormulaBar />
      <Sheet />
      <SheetTabs />
      <Watermark />
    </div>
  );
}
